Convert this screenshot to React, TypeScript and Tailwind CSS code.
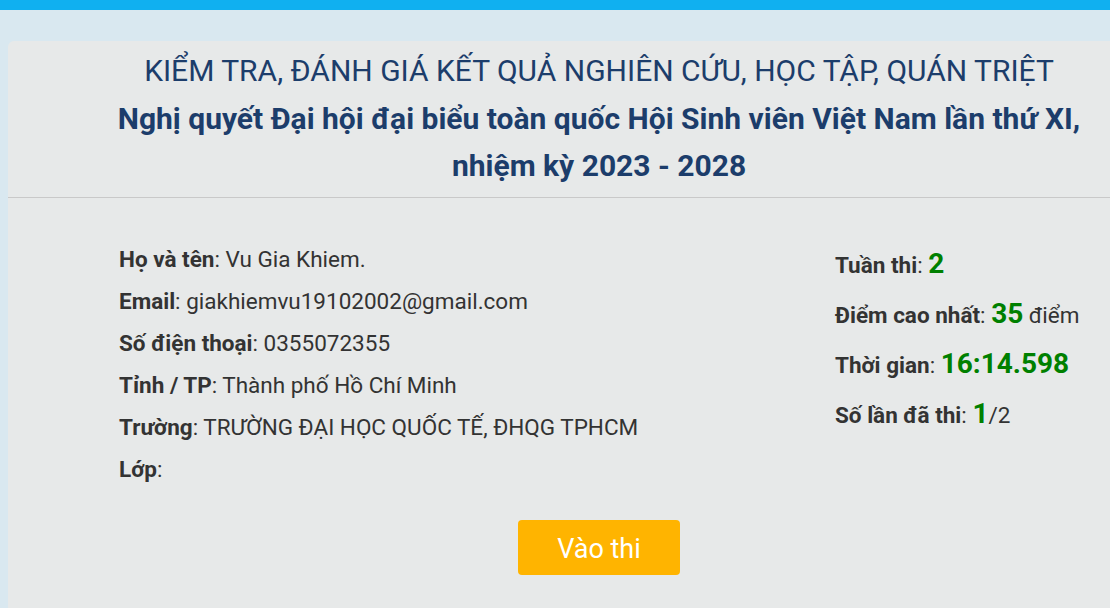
export default function App() {
  const info = [
    { label: "Họ và tên", value: "Vu Gia Khiem." },
    { label: "Email", value: "giakhiemvu19102002@gmail.com" },
    { label: "Số điện thoại", value: "0355072355" },
    { label: "Tỉnh / TP", value: "Thành phố Hồ Chí Minh" },
    { label: "Trường", value: "TRƯỜNG ĐẠI HỌC QUỐC TẾ, ĐHQG TPHCM" },
    { label: "Lớp", value: "" },
  ];

  return (
    <div
      className="min-h-[608px] w-[1110px] overflow-hidden bg-[#d9e8f0]"
      style={{ fontFamily: "Roboto, 'Noto Sans', sans-serif" }}
    >
      {/* Top bar */}
      <div className="h-[10px] bg-[#10b0f0]" />

      <div className="pt-[31px] pl-[8px]">
        <div className="w-[1182px] rounded-tl-md bg-[#e7e9e9] pb-[40px]">
          {/* Heading */}
          <div className="border-b border-[#c9c9c9] pt-[6px] pb-[7px] text-center text-[30px] leading-[47.5px] text-[#1c3d6b]">
            <div>KIỂM TRA, ĐÁNH GIÁ KẾT QUẢ NGHIÊN CỨU, HỌC TẬP, QUÁN TRIỆT</div>
            <div className="font-bold">
              Nghị quyết Đại hội đại biểu toàn quốc Hội Sinh viên Việt Nam lần thứ XI,
            </div>
            <div className="font-bold">nhiệm kỳ 2023 - 2028</div>
          </div>

          {/* Body */}
          <div className="flex pt-[40px] pl-[111px] text-[22.5px] text-[#333333]">
            <div className="w-[716px]">
              {info.map((row) => (
                <div key={row.label} className="leading-[42px]">
                  <span className="font-bold">{row.label}</span>: {row.value}
                </div>
              ))}
            </div>
            <div className="pt-[2px]">
              <div className="leading-[50px]">
                <span className="font-bold">Tuần thi</span>:{" "}
                <span className="text-[28px] leading-none font-bold text-[#008000]">2</span>
              </div>
              <div className="leading-[50px]">
                <span className="font-bold">Điểm cao nhất</span>:{" "}
                <span className="text-[28px] leading-none font-bold text-[#008000]">35</span> điểm
              </div>
              <div className="leading-[50px]">
                <span className="font-bold">Thời gian</span>:{" "}
                <span className="text-[28px] leading-none font-bold text-[#008000]">16:14.598</span>
              </div>
              <div className="leading-[50px]">
                <span className="font-bold">Số lần đã thi</span>:{" "}
                <span className="text-[28px] leading-none font-bold text-[#008000]">1</span>/2
              </div>
            </div>
          </div>

          {/* Button */}
          <div className="flex w-[1182px] justify-center pt-[30px]">
            <button className="h-[55px] w-[162px] rounded-[4px] bg-[#ffb400] pt-[4px] text-[27px] text-white">
              Vào thi
            </button>
          </div>
        </div>
      </div>
    </div>
  );
}
